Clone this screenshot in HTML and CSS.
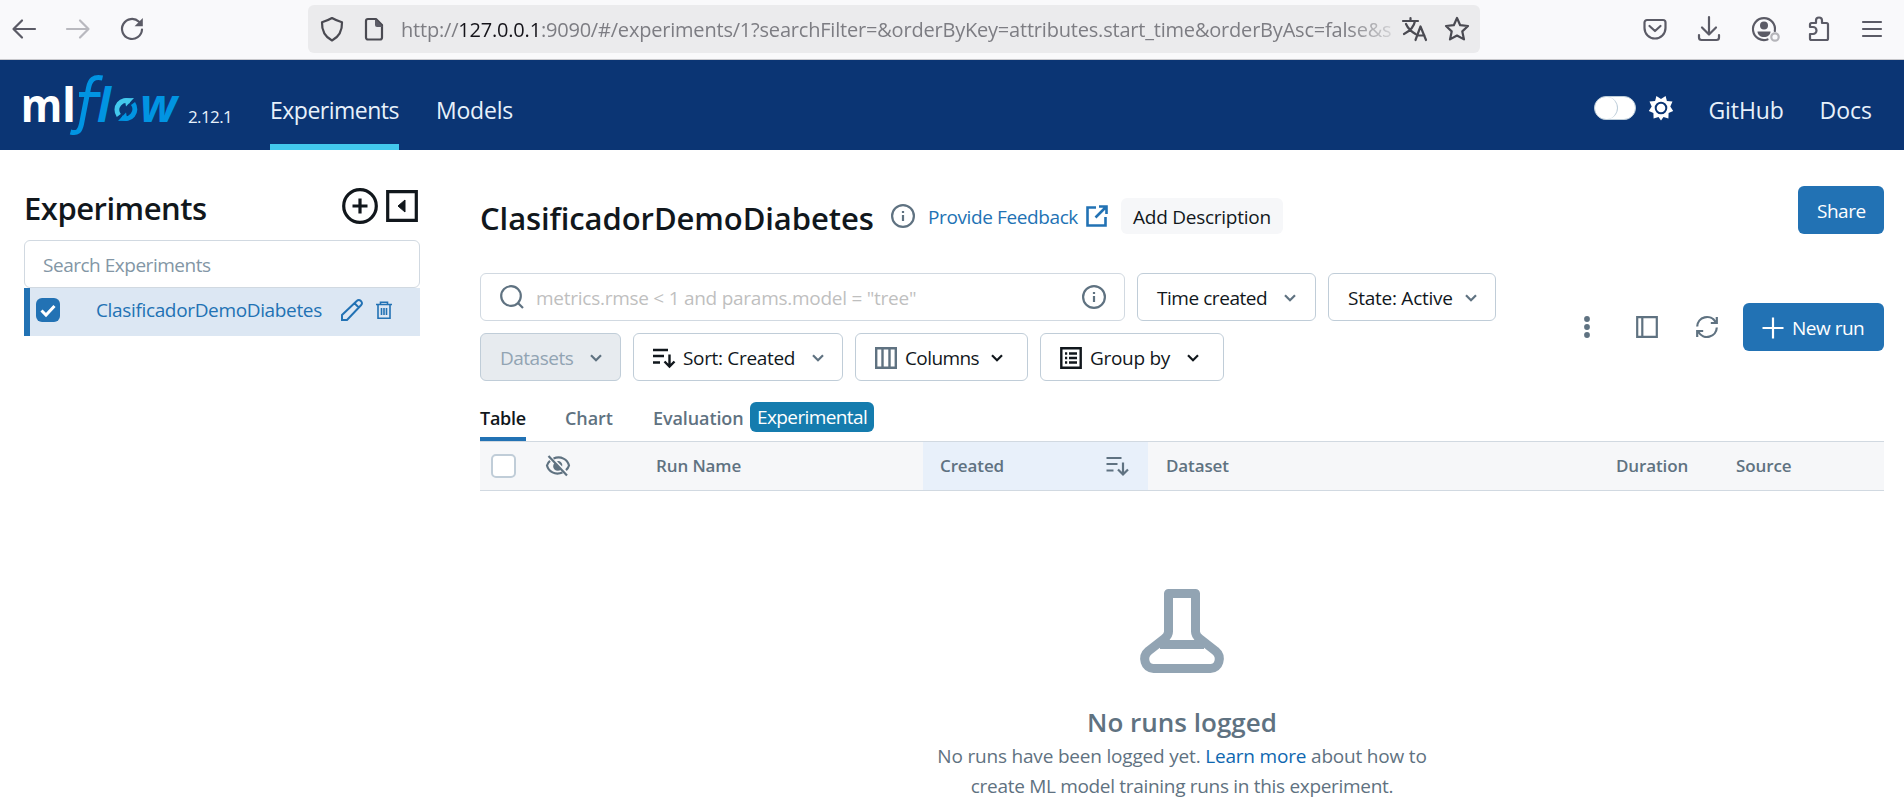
FILE: index.html
```html
<!DOCTYPE html>
<html lang="en">
<head>
<meta charset="utf-8">
<title>MLflow</title>
<link rel="stylesheet" href="styles.css">
</head>
<body>
<header class="browser">
  <svg class="ic back" width="24" height="24" viewBox="0 0 24 24"><path d="M23 12H2M10 3.500L1.500 12l8.500 8.500"/></svg>
  <svg class="ic forward" width="24" height="24" viewBox="0 0 24 24"><path d="M1 12h21M14 3.500L22.500 12 14 20.500"/></svg>
  <svg class="ic reload" width="24" height="24" viewBox="0 0 24 24"><path d="M22 12.500A10 10 0 1 1 19 4.800"/><path class="fill" d="M22.800 1v8.200h-8.200z"/></svg>
  <div class="urlbar">
    <svg class="ic shield" width="24" height="26" viewBox="0 0 24 26"><path d="M12 2c3 1.800 6 3 10 4.200C22.300 14 19.500 20.500 12 24.500 4.500 20.500 1.700 14 2 6.200 6 5 9 3.800 12 2z"/></svg>
    <svg class="ic page" width="20" height="24" viewBox="0 0 20 24"><path d="M4 2h8l6 6v12.500a2 2 0 0 1-2 2H4a2 2 0 0 1-2-2V4a2 2 0 0 1 2-2z"/><path class="fill" d="M11 2l8 8h-6a2 2 0 0 1-2-2z"/></svg>
    <span class="url">http://<b>127.0.0.1</b>:9090/#/experiments/1?searchFilter=&amp;orderByKey=attributes.start_time&amp;orderByAsc=false&amp;s</span>
    <svg class="ic translate" width="26" height="26" viewBox="0 0 26 26"><path d="M1 5h15M8.500 2v3M13 5C12 11 7 15.500 2 18M4 8c2 4.500 6 8 9.500 10M13.500 24l5-13.500 5.500 13.500M15.500 19.500h7"/></svg>
    <svg class="ic star" width="26" height="26" viewBox="0 0 26 26"><path d="M13 2l3.200 7.200 7.800.8-5.700 5.400 1.700 8L13 19.500 6 23.400l1.700-8L2 10l7.800-.8z"/></svg>
  </div>
  <div class="tools">
    <svg class="ic" width="24" height="24" viewBox="0 0 24 24"><path d="M4 3h16a2.500 2.500 0 0 1 2.500 2.500V11a10.500 10.500 0 0 1-21 0V5.500A2.500 2.500 0 0 1 4 3zM6.500 9l5.500 5 5.500-5"/></svg>
    <svg class="ic" width="24" height="26" viewBox="0 0 24 26"><path d="M12 1v17M5 11.500l7 7 7-7M2 19v2.500a2.500 2.500 0 0 0 2.500 2.500h15a2.500 2.500 0 0 0 2.500-2.500V19"/></svg>
    <svg class="ic profile" width="30" height="26" viewBox="0 0 30 26"><path d="M16.500 23.500A11 11 0 1 1 23.800 15"/><circle class="fill" cx="13" cy="9.500" r="4"/><path class="fill" d="M6.500 15.500h13c0 3.500-3 5.500-6.500 5.500s-6.500-2-6.500-5.500z"/><circle class="ring" cx="24" cy="21" r="3.700"/></svg>
    <svg class="ic" width="24" height="26" viewBox="0 0 24 26"><path d="M3 11V8.500A1.500 1.500 0 0 1 4.500 7H9V4.500a3 3 0 0 1 6 0V7h4.500A1.500 1.500 0 0 1 21 8.500v14a1.500 1.500 0 0 1-1.500 1.500h-15A1.500 1.500 0 0 1 3 22.500V18h3a3.500 3.500 0 0 0 0-7z"/></svg>
    <svg class="ic" width="22" height="20" viewBox="0 0 22 20"><path d="M2 3h18M2 10h18M2 17h18"/></svg>
  </div>
</header>

<nav class="navbar">
  <svg class="logo" width="162" height="66" viewBox="20 72 162 66">
    <text class="lg-white" x="20.800" y="122" textLength="41.500" lengthAdjust="spacingAndGlyphs">m</text>
    <text class="lg-white" x="62" y="122">l</text>
    <path class="swash" d="M102.500 78c-9-2-12.500 2-14 10l-7 36c-1.500 7-4 10-11 8M79 94.500h21.500"/>
    <text class="lg-blue" x="97" y="122">l</text>
    <path class="arc-dark" d="M133 103.500a9.500 9.500 0 0 1-11.500 14.300"/>
    <path class="tip-dark" d="M118 121l8-8.500 1.500 8z"/>
    <path class="arc-light" d="M118.800 115.500a9.500 9.500 0 0 1 11.500-14.300"/>
    <path class="tip-light" d="M134 98l-8 8.500-1.500-8z"/>
    <text class="lg-blue" x="140" y="122" textLength="37" lengthAdjust="spacingAndGlyphs">w</text>
  </svg>
  <span class="version">2.12.1</span>
  <a class="navlink active">Experiments</a>
  <a class="navlink models">Models</a>
  <span class="toggle"><i></i></span>
  <svg class="sun" width="26" height="26" viewBox="-13 -13 26 26"><path d="M0-9L4.600-12 5.900-7 11.500-6.500 9.300-1.500 12.200 3 7.600 5 7.400 10.500 2.500 9 0 12.500-2.500 9-7.400 10.500-7.600 5-12.200 3-9.300-1.500-11.500-6.500-5.900-7-4.600-12z"/><circle r="5.300"/></svg>
  <a class="navlink github">GitHub</a>
  <a class="navlink">Docs</a>
</nav>

<div class="layout">
  <aside class="sidebar">
    <div class="side-head">
      <h1>Experiments</h1>
      <svg width="36" height="36" viewBox="0 0 36 36"><circle cx="18" cy="18" r="16.300"/><path d="M18 10.500v15M10.500 18h15"/></svg>
      <svg width="32" height="32" viewBox="0 0 32 32"><path d="M1.700 1.700h28.600v28.600H1.700z"/><path class="solid" d="M19 10v12L12 16z"/></svg>
    </div>
    <div class="side-search">Search Experiments</div>
    <div class="side-row">
      <span class="check"><svg width="24" height="24" viewBox="0 0 24 24"><path d="M5.500 12.500l4.500 4.500 8.500-9"/></svg></span>
      <span class="exp">ClasificadorDemoDiabetes</span>
      <svg class="pencil" width="24" height="24" viewBox="0 0 24 24"><path d="M2 22v-5L17 2.800a2.500 2.500 0 0 1 3.600 0l.6.600a2.500 2.500 0 0 1 0 3.600L7 22zM14.500 5.200l4.300 4.300"/></svg>
      <svg class="trash" width="18" height="20" viewBox="0 0 18 20"><path d="M1 4.500h16M5.500 4.500V2.300h7v2.200M3 4.500v13.700h12V4.500M6.500 8v7M9 8v7M11.500 8v7"/></svg>
    </div>
  </aside>

  <main class="main">
    <div class="title-row">
      <h2>ClasificadorDemoDiabetes</h2>
      <svg class="info" width="24" height="24" viewBox="0 0 24 24"><circle cx="12" cy="12" r="10.900"/><path d="M12 11v6M12 7v2"/></svg>
      <a class="feedback">Provide Feedback</a>
      <svg class="external" width="22" height="22" viewBox="0 0 22 22"><path d="M10 2.500H1.500v18h18V12M13 1.500h7.500V9M20.500 1.500L9.500 12.500"/></svg>
      <span class="add-desc">Add Description</span>
      <button class="btn primary share">Share</button>
    </div>

    <div class="controls">
      <div class="filters">
        <div class="search">
          <svg class="gray" width="24" height="24" viewBox="0 0 24 24"><circle cx="11" cy="11" r="9.800"/><path d="M18 18l5 5"/></svg>
          <span class="ph">metrics.rmse &lt; 1 and params.model = "tree"</span>
          <svg class="info" width="24" height="24" viewBox="0 0 24 24"><circle cx="12" cy="12" r="10.900"/><path d="M12 11v6M12 7v2"/></svg>
        </div>
        <button class="btn time"><span>Time created</span><svg class="chev" width="12" height="8" viewBox="0 0 12 8"><path d="M1 1.200l5 5 5-5"/></svg></button>
        <button class="btn state"><span>State: Active</span><svg class="chev" width="12" height="8" viewBox="0 0 12 8"><path d="M1 1.200l5 5 5-5"/></svg></button>
        <button class="btn datasets"><span>Datasets</span><svg class="chev" width="12" height="8" viewBox="0 0 12 8"><path d="M1 1.200l5 5 5-5"/></svg></button>
        <button class="btn sort"><svg class="lead" width="22" height="20" viewBox="0 0 22 20"><path d="M0 2h15M0 8h11M0 14.500h7M16.500 6.500v12M11.500 13.500l5 5 5-5"/></svg><span>Sort: Created</span><svg class="chev" width="12" height="8" viewBox="0 0 12 8"><path d="M1 1.200l5 5 5-5"/></svg></button>
        <button class="btn columns"><svg class="lead slate" width="22" height="22" viewBox="0 0 22 22"><path d="M1.200 1.200h19.600v19.600H1.200zM7.500 1v20M14.500 1v20"/></svg><span>Columns</span><svg class="chev dark" width="12" height="8" viewBox="0 0 12 8"><path d="M1 1.200l5 5 5-5"/></svg></button>
        <button class="btn group"><svg class="lead" width="22" height="22" viewBox="0 0 22 22"><path d="M1.300 1.300h19.400v19.400H1.300zM5 6.500h2.200M9 6.500h8M5 11h2.200M9 11h8M5 15.500h2.200M9 15.500h8"/></svg><span>Group by</span><svg class="chev dark" width="12" height="8" viewBox="0 0 12 8"><path d="M1 1.200l5 5 5-5"/></svg></button>
      </div>
      <div class="actions">
        <svg class="dots" width="6" height="22" viewBox="0 0 6 22"><circle cx="3" cy="3" r="2.900"/><circle cx="3" cy="11" r="2.900"/><circle cx="3" cy="19" r="2.900"/></svg>
        <svg class="gray panel" width="22" height="22" viewBox="0 0 22 22"><path d="M1.200 1.200h19.600v19.600H1.200zM6.300 1v20"/></svg>
        <svg class="gray refresh" width="22" height="22" viewBox="0 0 22 22"><path d="M1.200 10.500A9.800 9.800 0 0 1 19.500 6M20.800 11.500A9.800 9.800 0 0 1 2.500 16M20.800 1v6h-6M1.200 21v-6h6"/></svg>
        <button class="btn primary new-run"><svg width="22" height="22" viewBox="0 0 22 22"><path d="M11 .500v21M.500 11h21"/></svg><span>New run</span></button>
      </div>
    </div>

    <div class="tabs">
      <span class="tab on">Table</span>
      <span class="tab chart">Chart</span>
      <span class="tab eval">Evaluation</span>
      <span class="badge">Experimental</span>
    </div>

    <div class="thead">
      <span class="box"></span>
      <svg class="gray eye" width="26" height="24" viewBox="0 0 26 24"><path d="M8.500 4.500C16 1.500 22.500 5.500 24 11.500c-.6 2-1.600 3.400-3 4.600M17.500 18.500C10 21.500 3.500 17.500 2 11.500c.6-2 1.600-3.400 3-4.600"/><path d="M9.500 9A4.500 4.500 0 0 0 16 15.500zM12 7.200a4.300 4.300 0 0 1 5.200 5.200z" class="pupil"/><path d="M3.500 2l18.500 19.500"/></svg>
      <span class="th run">Run Name</span>
      <span class="th created">Created<svg class="gray" width="23" height="20" viewBox="0 0 22 20"><path d="M0 2h15M0 8h11M0 14.500h7M16.500 6.500v12M11.500 13.500l5 5 5-5"/></svg></span>
      <span class="th dataset">Dataset</span>
      <span class="th duration">Duration</span>
      <span class="th source">Source</span>
    </div>

    <div class="empty">
      <svg class="flask" width="84" height="84" viewBox="0 0 84 84"><path d="M28.500 4.500h27v38c0 3 1.500 5 4 7L75.500 62c7 6 3.500 17.500-5 17.500h-57C5 79.500 1.500 68 8.500 62l16-12.500c2.500-2 4-4 4-7zM20 55.500h44"/></svg>
      <h3>No runs logged</h3>
      <p>No runs have been logged yet. <a>Learn more</a> about how to<br><span>create ML model training runs in this experiment.</span></p>
    </div>
  </main>
</div>
</body>
</html>
```
FILE: styles.css
```css
* { box-sizing: border-box; }
body { margin: 0; width: 1904px; height: 812px; overflow: hidden; background: #fff; color: #11171c; font: 19px/28px "Open Sans", "Noto Sans", sans-serif; white-space: nowrap; }
svg { display: block; flex: none; fill: none; overflow: visible; }
h1, h2, h3, p { margin: 0; }

.browser { display: flex; align-items: center; height: 60px; padding: 0 21px 2px 12px; background: #f9f9fb; border-bottom: 1px solid #c8c8cc; }
.ic { stroke: #5b5b66; stroke-width: 2.2; stroke-linecap: round; stroke-linejoin: round; }
.ic .fill { fill: #5b5b66; stroke: none; }
.ic .ring { stroke: #b5b5ba; }
.forward { margin-left: 30px; opacity: .4; }
.reload { margin-left: 30px; }
.urlbar { display: flex; align-items: center; width: 1172px; height: 48px; margin-left: 164px; padding: 0 10px 0 12px; border-radius: 6px; background: #ebebed; }
.urlbar .ic { stroke: #4a4a52; }
.page { margin-left: 20px; }
.url { flex: none; width: 993px; height: 48px; margin-left: 17px; overflow: hidden; color: #7d7d83; font-size: 20px; line-height: 50px; letter-spacing: -.2px; -webkit-mask-image: linear-gradient(to right, #000 945px, transparent 1003px); mask-image: linear-gradient(to right, #000 945px, transparent 1003px); }
.url b { color: #15141a; font-weight: 400; }
.translate { margin-left: 8px; }
.star { margin-left: 16px; }
.tools { display: flex; align-items: center; gap: 30px; margin-left: auto; }
.profile { margin-right: -4px; }

.navbar { display: flex; align-items: flex-start; height: 90px; padding: 0 32px 0 20px; background: #0b3574; color: #e7f1fb; }
.logo { margin-top: 12px; }
.logo text { font-family: "Open Sans", sans-serif; font-size: 46px; font-weight: 700; letter-spacing: 0; }
.logo .lg-white { fill: #fff; }
.logo .lg-blue { fill: #0194e2; font-style: italic; }
.swash, .arc-dark { stroke: #0194e2; stroke-width: 5; }
.arc-light { stroke: #43c9ed; stroke-width: 5; }
.tip-light { fill: #43c9ed; }
.tip-dark { fill: #0194e2; }
.version { width: 44px; margin: 43px 38px 0 6px; font-size: 17px; letter-spacing: -.6px; }
.navlink { height: 90px; padding-top: 36px; font-size: 23px; }
.navlink.active { width: 129px; border-bottom: 6px solid #43c9ed; letter-spacing: -.5px; }
.models { margin-left: 37px; letter-spacing: -.2px; }
.toggle { width: 42px; height: 24px; margin: 36px 12px 0 auto; border: 1px solid #bdcdd9; border-radius: 12px; background: #fff; }
.toggle i { display: block; width: 23px; height: 22px; border: 1px solid #bdcdd9; border-width: 0 1px 0 0; border-radius: 12px; }
.sun { margin: 35px 34px 0 0; fill: #fff; }
.sun circle { stroke: #0b3574; stroke-width: 2; }
.github { width: 75px; margin-right: 36px; letter-spacing: -.1px; }

.layout { display: flex; }
.sidebar { width: 396px; margin-left: 24px; padding-top: 36px; }
.side-head { display: flex; align-items: center; gap: 8px; height: 40px; padding-right: 2px; margin-bottom: 14px; }
.side-head h1 { flex: 1; padding-top: 4px; font-size: 31px; line-height: 40px; font-weight: 600; letter-spacing: -.5px; }
.side-head svg { stroke: #11171c; stroke-width: 3.200; }
.side-head .solid { fill: #11171c; stroke-width: 1; stroke-linejoin: round; }
.side-search { height: 48px; padding-left: 18px; border: 1px solid #d1d9e1; border-radius: 6px; color: #8396a5; line-height: 48px; letter-spacing: -.48px; }
.side-row { display: flex; align-items: center; height: 48px; padding: 0 0 4px 12px; background: linear-gradient(to right, #2272b4 6px, #dce7f3 6px); color: #2272b4; }
.check { width: 24px; height: 24px; border-radius: 6px; background: #2272b4; }
.check svg { stroke: #fff; stroke-width: 3; }
.exp { width: 226px; margin-left: 36px; letter-spacing: -.35px; }
.pencil { margin-left: 18px; stroke: #2272b4; stroke-width: 2; }
.trash { margin-left: 11px; stroke: #2272b4; stroke-width: 1.600; }

.main { width: 1404px; margin-left: 60px; padding-top: 36px; }
.title-row { display: flex; align-items: center; height: 60px; }
.title-row h2 { width: 411px; font-size: 31px; line-height: 40px; font-weight: 600; padding-top: 4px; letter-spacing: -.08px; }
.info, .gray { stroke: #5f7281; stroke-width: 2.200; }
.title-row .info { margin-right: 13px; }
.feedback { width: 150px; margin-right: 8px; padding-top: 1px; color: #2272b4; letter-spacing: -.39px; }
.external { stroke: #2272b4; stroke-width: 2.600; }
.add-desc { width: 162px; height: 36px; margin-left: 13px; padding: 1px 12px 0; border-radius: 6px; background: #f6f7f9; line-height: 36px; letter-spacing: -.25px; }
.btn { display: flex; align-items: center; height: 48px; padding: 1px 19px 0; border: 1px solid #c0cdd8; border-radius: 6px; background: #fff; color: #11171c; font: inherit; }
.btn.primary { border: 0; background: #2272b4; color: #fff; padding: 1px 19px 0; letter-spacing: -.5px; }
.share { width: 86px; margin: 0 0 12px auto; }

.controls { display: flex; align-items: center; justify-content: space-between; margin-top: 27px; }
.filters { display: flex; flex-wrap: wrap; gap: 12px; width: 1024px; }
.search { display: flex; align-items: center; width: 645px; height: 48px; padding: 0 18px 0 19px; border: 1px solid #d1d9e1; border-radius: 6px; }
.ph { flex: 1; margin-left: 12px; padding-top: 2px; color: #bfbfbf; letter-spacing: -.26px; }
.search .info { margin-bottom: 1px; }
.chev { margin-left: auto; stroke: #5f7281; stroke-width: 2.200; }
.chev.dark { stroke: #11171c; }
.time { width: 179px; letter-spacing: -.45px; }
.state { width: 168px; padding-right: 18px; letter-spacing: -.25px; }
.datasets { width: 141px; padding-right: 18px; background: #e7ebef; color: #92a4b3; letter-spacing: -.5px; }
.sort { width: 210px; padding-right: 18px; letter-spacing: -.33px; }
.lead { margin-right: 8px; stroke: #11171c; stroke-width: 2.400; }
.lead.slate { stroke: #5f7281; stroke-width: 2.400; }
.columns { width: 173px; padding-right: 24px; letter-spacing: -.6px; }
.group { width: 184px; padding-right: 24px; letter-spacing: -.3px; }
.actions { display: flex; align-items: center; }
.dots { margin-right: 46px; fill: #5f7281; }
.panel { margin-right: 38px; }
.refresh { margin-right: 25px; }
.new-run { width: 141px; }
.new-run svg { margin-right: 8px; stroke: #fff; stroke-width: 2.200; }

.tabs { display: flex; height: 60px; padding-top: 21px; align-items: flex-start; font-weight: 600; font-size: 18px; color: #5f7281; letter-spacing: -.1px; }
.tab { height: 39px; line-height: 33px; }
.tab.on { width: 46px; color: #11171c; border-bottom: 4px solid #2272b4; letter-spacing: -.25px; }
.chart { width: 49px; margin-left: 39px; }
.eval { width: 91px; margin-left: 39px; }
.badge { width: 124px; height: 30px; margin-left: 6px; padding-left: 7px; border-radius: 6px; background: #157cae; color: #fff; font-weight: 400; line-height: 31px; font-size: 19px; letter-spacing: -.6px; }

.thead { display: flex; align-items: center; height: 50px; border: 1px solid #d1d9e1; border-width: 1px 0; background: #f6f7f9; color: #5f7281; font-size: 17px; font-weight: 600; letter-spacing: -.12px; }
.box { width: 25px; height: 24px; margin-left: 11px; border: 2px solid #c0cdd8; border-radius: 5px; background: #fff; }
.eye { width: 26px; margin-left: 29px; }
.pupil { fill: #5f7281; stroke: none; }
.run { width: 267px; margin-left: 85px; }
.created { display: flex; align-items: center; justify-content: space-between; width: 225px; height: 48px; padding: 0 19px 0 17px; background: #e8f0fa; }
.dataset { width: 450px; margin-left: 18px; }
.duration { width: 120px; }

.empty { display: flex; flex-direction: column; align-items: center; padding-top: 98px; color: #5f7281; text-align: center; }
.flask { stroke: #92a4b3; stroke-width: 9; stroke-linejoin: round; }
.empty h3 { margin-top: 30px; font-size: 26px; line-height: 38px; font-weight: 600; }
.empty p { line-height: 30px; letter-spacing: -.19px; }
.empty p span { letter-spacing: -.31px; }
.empty p a { color: #0e67b0; }
```
